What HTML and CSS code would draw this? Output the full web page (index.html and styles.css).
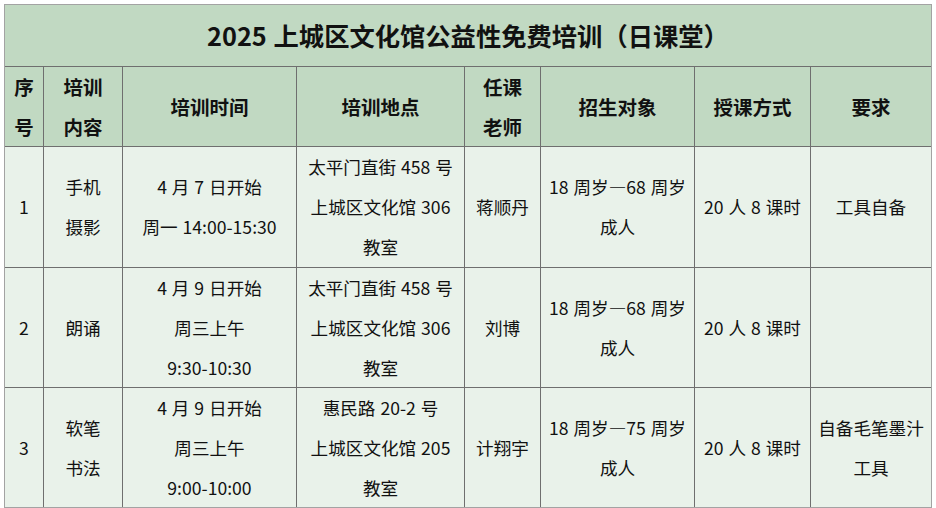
FILE: index.html
```html
<!DOCTYPE html>
<html lang="zh-CN">
<head>
<meta charset="utf-8">
<title>2025 上城区文化馆公益性免费培训（日课堂）</title>
<link rel="stylesheet" href="styles.css">
</head>
<body>
<div class="sheet">
  <div class="cell title">2025 上城区文化馆公益性免费培训（日课堂）</div>

  <div class="cell head">序<br>号</div>
  <div class="cell head">培训<br>内容</div>
  <div class="cell head">培训时间</div>
  <div class="cell head">培训地点</div>
  <div class="cell head">任课<br>老师</div>
  <div class="cell head">招生对象</div>
  <div class="cell head">授课方式</div>
  <div class="cell head">要求</div>

  <div class="cell">1</div>
  <div class="cell">手机<br>摄影</div>
  <div class="cell">4 月 7 日开始<br>周一 14:00-15:30</div>
  <div class="cell">太平门直街 458 号<br>上城区文化馆 306<br>教室</div>
  <div class="cell">蒋顺丹</div>
  <div class="cell">18 周岁—68 周岁<br>成人</div>
  <div class="cell">20 人 8 课时</div>
  <div class="cell">工具自备</div>

  <div class="cell">2</div>
  <div class="cell">朗诵</div>
  <div class="cell">4 月 9 日开始<br>周三上午<br>9:30-10:30</div>
  <div class="cell">太平门直街 458 号<br>上城区文化馆 306<br>教室</div>
  <div class="cell">刘博</div>
  <div class="cell">18 周岁—68 周岁<br>成人</div>
  <div class="cell">20 人 8 课时</div>
  <div class="cell"></div>

  <div class="cell">3</div>
  <div class="cell">软笔<br>书法</div>
  <div class="cell">4 月 9 日开始<br>周三上午<br>9:00-10:00</div>
  <div class="cell">惠民路 20-2 号<br>上城区文化馆 205<br>教室</div>
  <div class="cell">计翔宇</div>
  <div class="cell">18 周岁—75 周岁<br>成人</div>
  <div class="cell">20 人 8 课时</div>
  <div class="cell">自备毛笔墨汁<br>工具</div>
</div>
</body>
</html>
```

FILE: styles.css
```css
html, body {
  margin: 0;
  padding: 0;
  background: #ffffff;
}

body {
  font-family: "Noto Sans CJK SC", "Noto Sans", sans-serif;
  color: #111111;
}

.sheet {
  margin: 4px 0 0 4px;
  width: 926px;
  display: grid;
  grid-template-columns: 38px 78px 173px 167px 75px 153px 115px 120px;
  grid-template-rows: 61px 79px 120px 119px 119px;
  gap: 1px;
  background: #6f6f6f;
  border: 1px solid #a3a3a3;
}

.cell {
  display: flex;
  align-items: center;
  justify-content: center;
  text-align: center;
  background: #e9f2ea;
  font-size: 17.6px;
  line-height: 40px;
  word-spacing: 1px;
}

.title {
  grid-column: 1 / -1;
  background: #c1d9c2;
  font-size: 25.3px;
  font-weight: 700;
  line-height: 1;
}

.head {
  background: #c1d9c2;
  font-size: 19.5px;
  font-weight: 700;
}
```
